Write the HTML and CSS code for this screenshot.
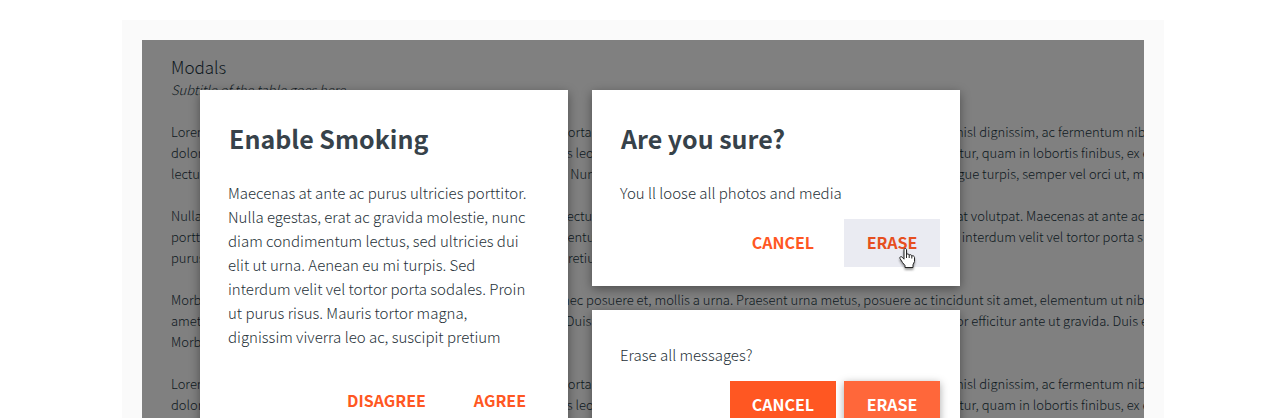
FILE: index.html
```html
<!DOCTYPE html>
<html lang="en">
<head>
<meta charset="utf-8">
<meta name="viewport" content="width=device-width, initial-scale=1">
<title>Modals</title>
<link rel="stylesheet" href="styles.css">
</head>
<body>
<main class="frame">
  <section class="stage">
    <header class="intro">
      <h1 class="intro-title">Modals</h1>
      <p class="intro-subtitle">Subtitle of the table goes here</p>
    </header>
    <div class="copy">
      <p>Lorem ipsum dolor sit amet, sapien pellentesque consectetur arcu porta lacus ultrices sed tempor tempor vestibulum eros arcu quis in nisl dignissim, ac fermentum nibh<br>
      dolor lacus massa in sed tortor tempor nulla finibus sapien non lacus leo magna magna in finibus sapien mauris in nulla nulla velit efficitur, quam in lobortis finibus, ex e<br>
      lectus finibus nulla sapien et at a ut a non non sapien velit velit ante. Nunc vitae massa consectetur tortor massa nisi tortor tortor ut congue turpis, semper vel orci ut, ma</p>
      <p>Nulla sed velit ut finibus tortor ut id ut tortor lacus a tempor id arcu lectus non ut tempor in in tortor quis at sapien augue mauris non erat volutpat. Maecenas at ante ac<br>
      porttitor nulla viverra at non a id at vitae pellentesque tortor condimentum consectetur at mauris aliquam tortor nulla in sapien non dui interdum velit vel tortor porta s<br>
      purus quis viverra arcu viverra justo id nulla quis viverra tortor eros pretium</p>
      <p>Morbi pellentesque arcu id augue a a justo vestibulum in tortor nisi nec posuere et, mollis a urna. Praesent urna metus, posuere ac tincidunt sit amet, elementum ut nibh<br>
      amet a nulla justo ultrices ut viverra vestibulum nisi justo vitae eros. Duis arcu sapien vestibulum consectetur et et sed justo tortor tempor efficitur ante ut gravida. Duis e<br>
      Morbi a nulla justo</p>
      <p>Lorem ipsum dolor sit amet, sapien pellentesque consectetur arcu porta lacus ultrices sed tempor tempor vestibulum eros arcu quis in nisl dignissim, ac fermentum nibh<br>
      dolor lacus massa in sed tortor tempor nulla finibus sapien non lacus leo magna magna in finibus sapien mauris in nulla nulla velit efficitur, quam in lobortis finibus, ex e</p>
    </div>

    <div class="overlay">
      <section class="modal" role="dialog" aria-labelledby="smoking-title">
        <h2 class="modal-title" id="smoking-title">Enable Smoking</h2>
        <p class="modal-text">Maecenas at ante ac purus ultricies porttitor. Nulla egestas, erat ac gravida molestie, nunc diam condimentum lectus, sed ultricies dui elit ut urna. Aenean eu mi turpis. Sed interdum velit vel tortor porta sodales. Proin ut purus risus. Mauris tortor magna, dignissim viverra leo ac, suscipit pretium</p>
        <div class="actions actions-spaced">
          <button class="btn" type="button">DISAGREE</button>
          <button class="btn" type="button">AGREE</button>
        </div>
      </section>

      <div class="modal-column">
        <section class="modal" role="dialog" aria-labelledby="sure-title">
          <h2 class="modal-title" id="sure-title">Are you sure?</h2>
          <p class="modal-text">You ll loose all photos and media</p>
          <div class="actions">
            <button class="btn" type="button">CANCEL</button>
            <button class="btn btn-hover" type="button">ERASE
              <svg class="cursor" viewBox="0 0 17 21" width="17" height="21" aria-hidden="true">
                <path d="M5 1.500C5 .2 7.500 .2 7.500 1.500V6.500C8.200 5.600 10 5.900 10.200 7C11.200 6.300 12.600 6.800 12.800 7.900C14 7.400 15.500 8.200 15.500 9.500V13.500L14 16.800V19.500H6V17.500L3.500 14.500L1 10.500C.3 9 2 8 3.200 9.200L5 11.200Z"/>
                <path class="cursor-lines" d="M7.500 6V10M10.200 7V10M12.800 8V10.500"/>
              </svg>
            </button>
          </div>
        </section>

        <section class="modal" role="dialog" aria-labelledby="erase-text">
          <p class="modal-text" id="erase-text">Erase all messages?</p>
          <div class="actions">
            <button class="btn btn-solid" type="button">CANCEL</button>
            <button class="btn btn-solid btn-raised" type="button">ERASE</button>
          </div>
        </section>
      </div>
    </div>
  </section>
</main>
</body>
</html>
```
FILE: styles.css
```css
* {
  box-sizing: border-box;
}

body {
  height: 100vh;
  margin: 0;
  overflow: hidden;
  background: #fff;
  color: #37424a;
  font-family: "Noto Sans CJK SC", "Noto Sans", sans-serif;
  font-weight: 300;
}

h1, h2, p {
  margin: 0;
}

.frame {
  margin: 20px 116px 0 122px;
  padding: 20px;
  background: #fafafa;
}

.stage {
  position: relative;
  min-height: 100vh;
  padding: 15px 0 28px 29px;
  overflow: hidden;
  background: #808080;
  color: #0e181e;
}

.intro {
  margin-bottom: 21px;
}

.intro-title {
  font-size: 17px;
  font-weight: 300;
  line-height: 24px;
}

.intro-subtitle {
  margin-top: 1px;
  font-size: 13px;
  font-style: italic;
  line-height: 20px;
}

.copy {
  font-size: 13px;
  line-height: 21px;
  white-space: nowrap;
}

.copy p {
  margin-bottom: 21px;
}

.overlay {
  position: absolute;
  inset: 0;
  display: flex;
  align-items: flex-start;
  gap: 24px;
  padding: 50px 58px;
}

.modal-column {
  display: flex;
  flex-direction: column;
  gap: 24px;
}

.modal {
  width: 368px;
  padding: 33px 20px 19px 28px;
  background: #fff;
  box-shadow: 0 3px 10px rgba(0, 0, 0, 0.4);
  color: #263138;
}

.modal-title {
  margin: 0 0 28px 1px;
  color: #37424a;
  font-size: 25px;
  font-weight: 700;
  line-height: 30px;
}

.modal-text {
  padding-right: 20px;
  font-size: 15px;
  line-height: 24px;
}

.actions {
  display: flex;
  justify-content: flex-end;
  gap: 8px;
  margin-top: 14px;
}

.actions-spaced {
  gap: 4px;
  margin-top: 28px;
}

.btn {
  position: relative;
  min-width: 96px;
  height: 48px;
  padding: 0 22px 2px;
  border: 0;
  background: transparent;
  color: #ff5722;
  font: inherit;
  font-size: 16px;
  font-weight: 700;
}

.btn-hover {
  background: #eaebf2;
  color: #e64f20;
}

.btn-solid {
  background: #ff5722;
  color: #fff;
}

.btn-raised {
  background: #ff673a;
  box-shadow: 0 2px 8px rgba(0, 0, 0, 0.35);
}

.cursor {
  position: absolute;
  top: 29px;
  left: 55px;
  fill: #fff;
  stroke: #222;
  stroke-width: 1;
  filter: drop-shadow(0 2px 1px rgba(0, 0, 0, 0.4));
}

.cursor-lines {
  fill: none;
}
```
